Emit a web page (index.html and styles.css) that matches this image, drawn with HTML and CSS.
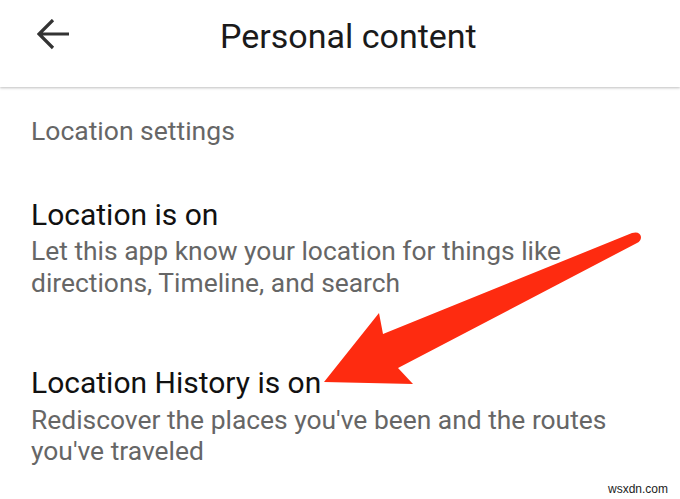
FILE: index.html
```html
<!DOCTYPE html>
<html>
<head>
<meta charset="utf-8">
<link rel="stylesheet" href="styles.css">
</head>
<body>
<div class="page">
  <header class="appbar">
    <svg class="back" width="34" height="34" viewBox="0 0 34 34">
      <path d="M2 15 H32 M16 1 L2 15 L16 29" fill="none" stroke="#333" stroke-width="3.2" stroke-linecap="butt" stroke-linejoin="miter"/>
    </svg>
    <h1 class="title">Personal content</h1>
  </header>
  <main class="content">
    <div class="section-label">Location settings</div>
    <div class="item">
      <div class="item-title">Location is on</div>
      <div class="item-desc">Let this app know your location for things like directions, Timeline, and search</div>
    </div>
    <div class="item item-second">
      <div class="item-title">Location History is on</div>
      <div class="item-desc">Rediscover the places you've been and the routes you've traveled</div>
    </div>
  </main>
  <svg class="annotation" width="680" height="499" viewBox="0 0 680 499">
    <path d="M324 382 L379 313 L383 334 L632 233 Q640 231 641 237 Q641 241 637 243 L398 368 L413 384 Z" fill="#fe2b10"/>
  </svg>
  <div class="watermark">wsxdn.com</div>
</div>
</body>
</html>
```
FILE: styles.css
```css
html, body {
  margin: 0;
  padding: 0;
  background: #ffffff;
}
.page {
  position: relative;
  width: 680px;
  height: 499px;
  overflow: hidden;
  font-family: Roboto, "Noto Sans", sans-serif;
}
.appbar {
  height: 87px;
  display: flex;
  align-items: center;
  background: #fff;
  box-shadow: 0 1px 2px rgba(0,0,0,0.18), 0 2px 3px rgba(0,0,0,0.06);
  position: relative;
}
.back {
  margin-left: 37px;
  margin-top: -16px;
  flex: none;
}
.title {
  margin: -16px 0 0 149px;
  font-weight: 400;
  font-size: 34px;
  color: #1a1a1a;
  line-height: 40px;
}
.content {
  padding: 28px 0 0 31px;
}
.section-label {
  font-size: 26.5px;
  line-height: 32px;
  color: #666;
}
.item {
  margin-top: 50px;
}
.item-title {
  font-size: 30px;
  line-height: 36px;
  color: #111;
}
.item-desc {
  font-size: 26.4px;
  line-height: 32px;
  color: #666;
  width: 600px;
  margin-top: 2px;
}
.item-second {
  margin-top: 66px;
}
.item-second .item-desc {
  margin-top: 4px;
  line-height: 31px;
}
.annotation {
  position: absolute;
  left: 0;
  top: 0;
}
.watermark {
  position: absolute;
  right: 12px;
  bottom: 3px;
  font-family: "Liberation Sans", Arial, sans-serif;
  font-size: 12px;
  color: #222;
}
```
